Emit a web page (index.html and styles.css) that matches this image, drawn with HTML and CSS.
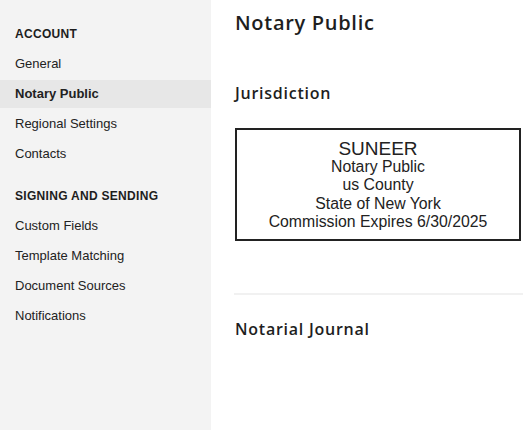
FILE: index.html
```html
<!DOCTYPE html>
<html>
<head>
<meta charset="utf-8">
<link rel="stylesheet" href="styles.css">
</head>
<body>
<div class="layout">
  <nav class="sidebar">
    <div class="group-title first">ACCOUNT</div>
    <a class="item">General</a>
    <a class="item active">Notary Public</a>
    <a class="item">Regional Settings</a>
    <a class="item">Contacts</a>
    <div class="group-title">SIGNING AND SENDING</div>
    <a class="item">Custom Fields</a>
    <a class="item">Template Matching</a>
    <a class="item">Document Sources</a>
    <a class="item">Notifications</a>
  </nav>
  <main class="content">
    <h1 class="page-title">Notary Public</h1>
    <h2 class="section-title">Jurisdiction</h2>
    <div class="stamp">
      <div class="stamp-name">SUNEER</div>
      <div class="stamp-line">Notary Public</div>
      <div class="stamp-line">us County</div>
      <div class="stamp-line">State of New York</div>
      <div class="stamp-line">Commission Expires 6/30/2025</div>
    </div>
    <hr class="divider">
    <h2 class="section-title journal">Notarial Journal</h2>
  </main>
</div>
</body>
</html>
```

FILE: styles.css
```css
html, body {
  margin: 0;
  padding: 0;
  background: #fff;
}
body {
  font-family: "Liberation Sans", Arial, sans-serif;
  color: #1f1f1f;
}
.layout {
  display: flex;
  height: 430px;
  overflow: hidden;
}
.sidebar {
  width: 211px;
  flex: none;
  background: #f3f3f3;
  display: flex;
  flex-direction: column;
  padding-top: 25px;
  box-sizing: border-box;
}
.group-title {
  font-size: 12px;
  font-weight: bold;
  letter-spacing: 0.3px;
  padding: 0 15px;
  height: 19px;
  line-height: 19px;
  margin-bottom: 6px;
  color: #1d1d1d;
}
.group-title:not(.first) {
  margin-top: 17px;
}
.item {
  display: block;
  font-size: 13px;
  height: 28px;
  line-height: 28px;
  margin-bottom: 2px;
  padding: 0 15px;
  color: #222;
}
.item.active {
  background: #e7e7e7;
  font-weight: bold;
}
.content {
  flex: 1;
  padding: 9px 0 0 24px;
  min-width: 0;
}
.page-title {
  font-family: "Open Sans", sans-serif;
  font-weight: 600;
  font-size: 20px;
  letter-spacing: 0.7px;
  line-height: 28px;
  margin: 0;
  color: #1e1e1e;
}
.section-title {
  font-family: "Open Sans", sans-serif;
  font-weight: 600;
  font-size: 16px;
  letter-spacing: 0.75px;
  line-height: 22px;
  margin: 45px 0 0;
  color: #1e1e1e;
}
.stamp {
  margin-top: 24px;
  width: 286px;
  height: 113px;
  box-sizing: border-box;
  border: 2px solid #222;
  text-align: center;
  padding-top: 9px;
  color: #222;
}
.stamp-name {
  font-size: 19px;
  line-height: 19px;
}
.stamp-line {
  font-size: 15.8px;
  line-height: 18.4px;
}
.divider {
  border: none;
  border-top: 2px solid #f1f1f1;
  margin: 52px 0 0 -1px;
}
.section-title.journal {
  margin-top: 23px;
}
```
